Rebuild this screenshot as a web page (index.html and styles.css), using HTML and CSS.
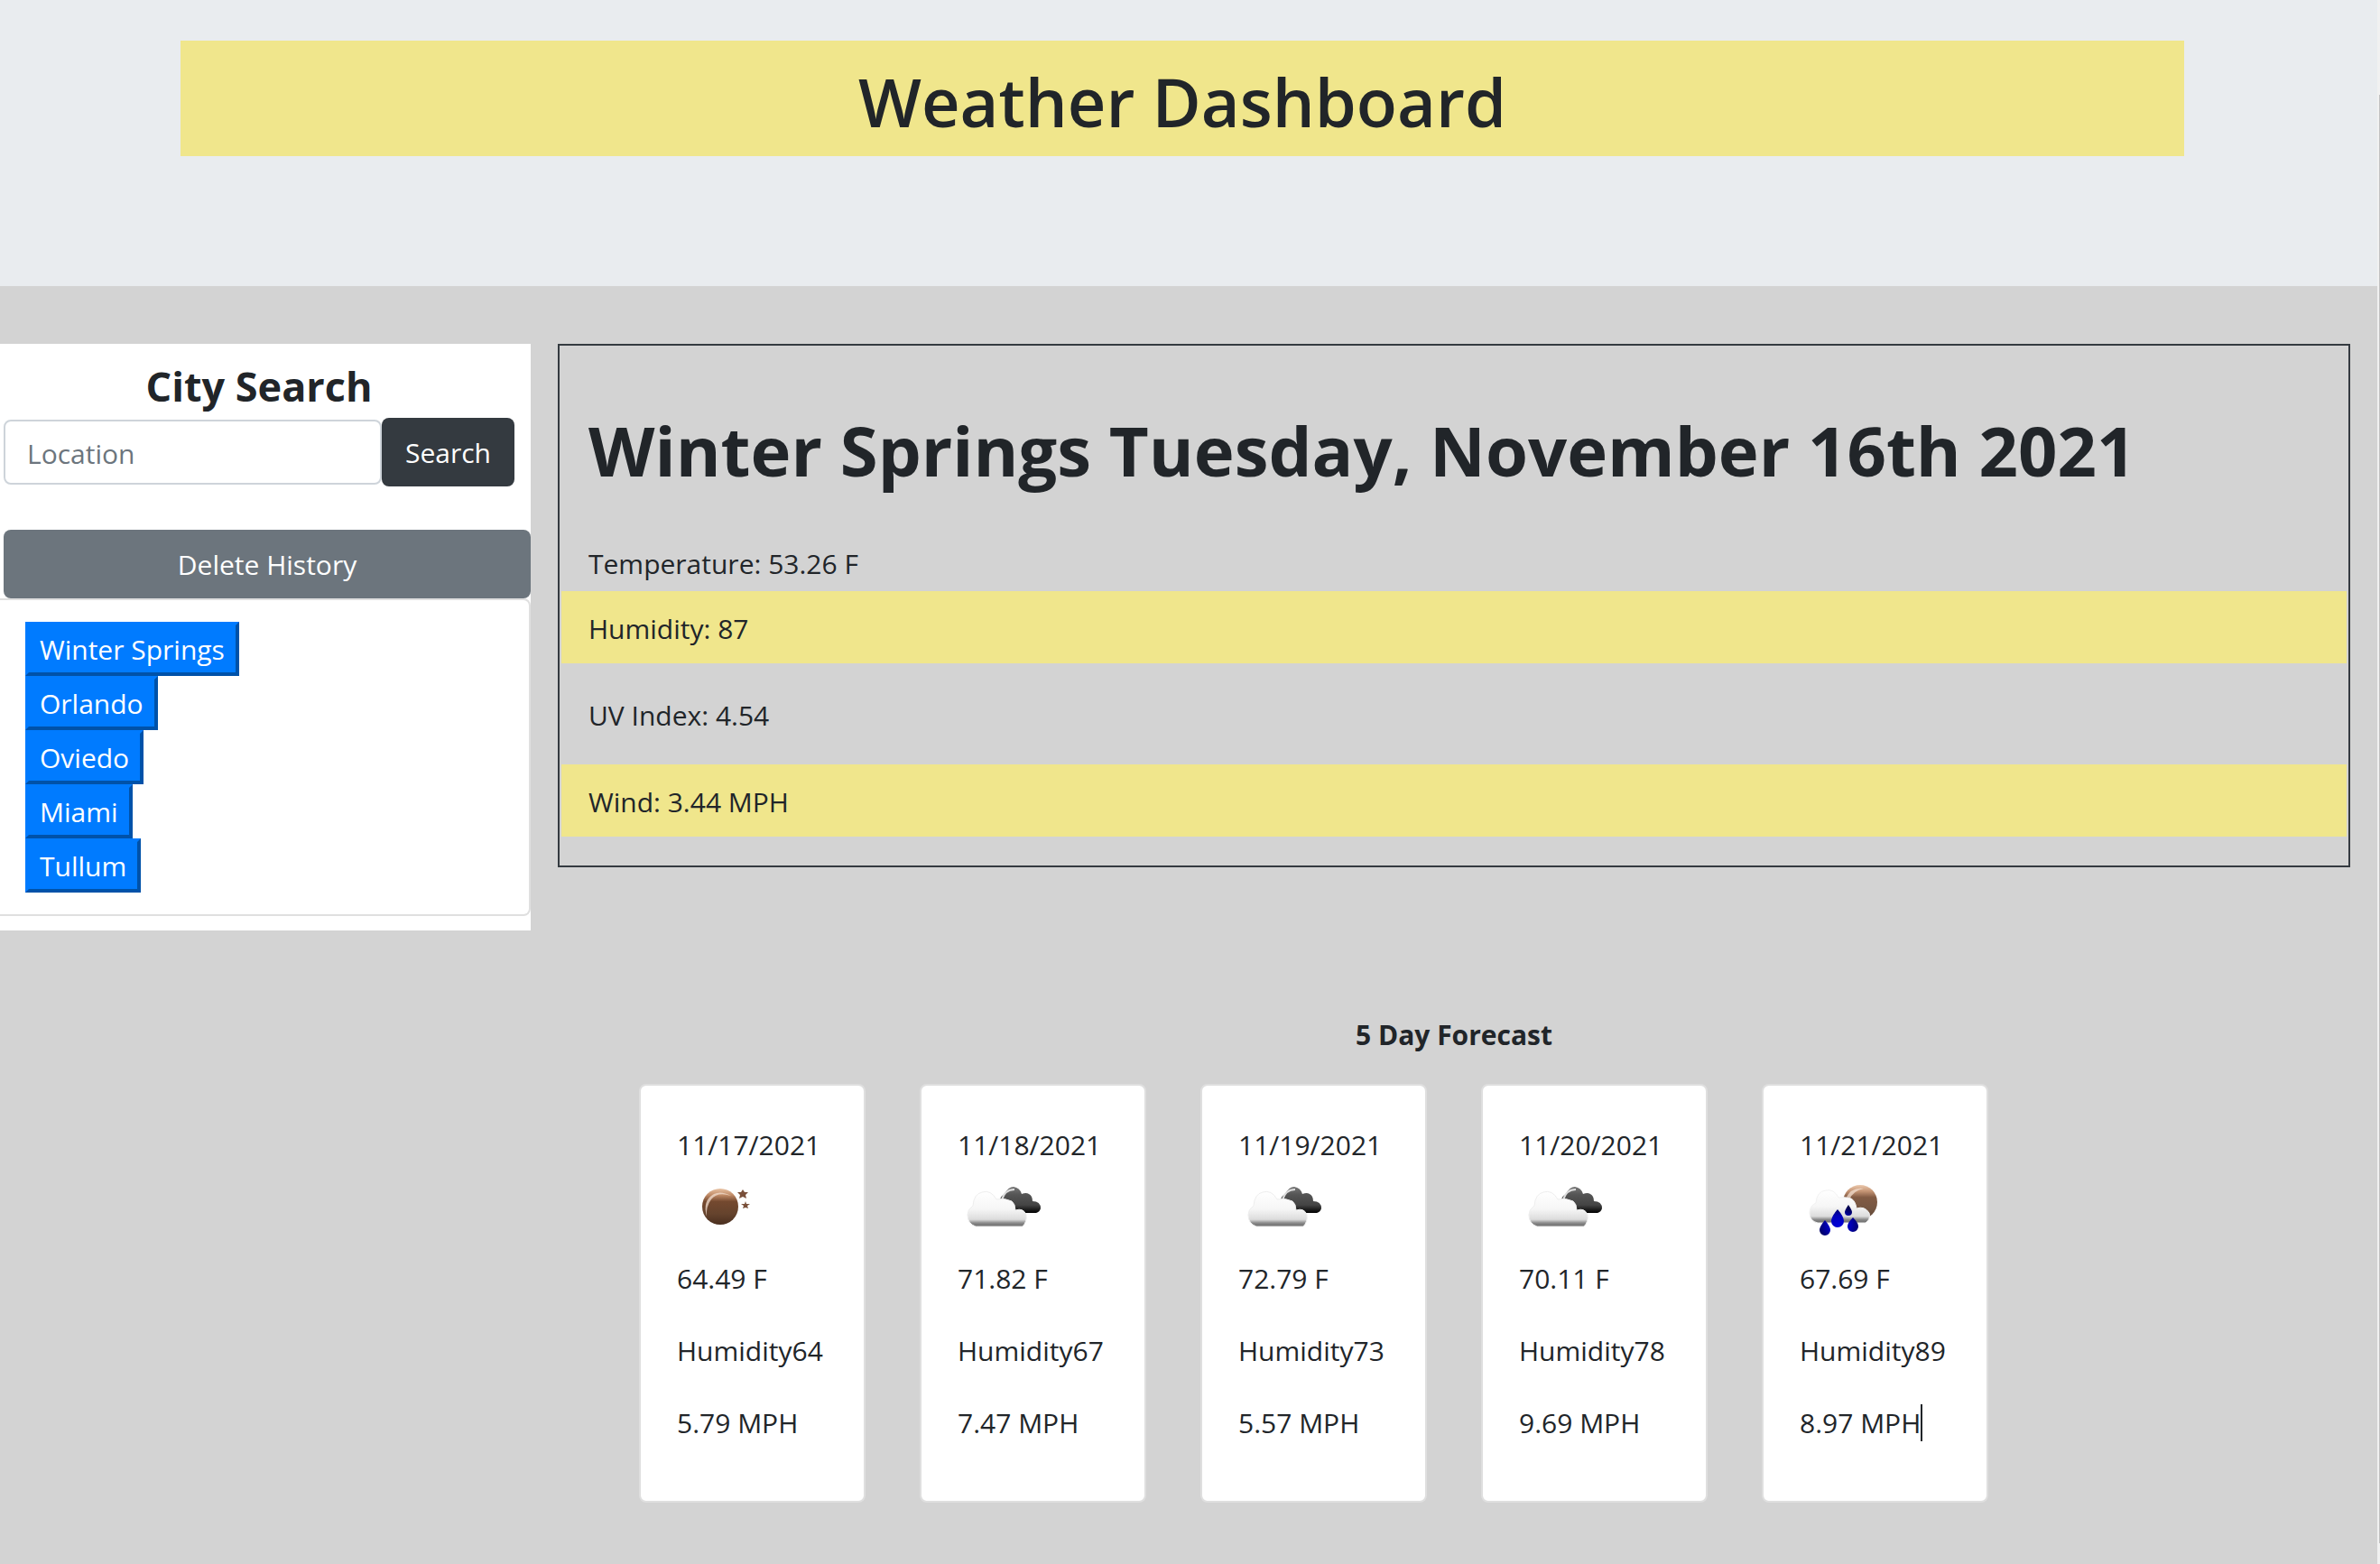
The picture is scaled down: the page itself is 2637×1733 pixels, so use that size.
FILE: index.html
```html
<!DOCTYPE html>
<html lang="en">
<head>
<meta charset="utf-8">
<title>Weather Dashboard</title>
<link rel="stylesheet" href="styles.css">
</head>
<body>
<svg class="defs" aria-hidden="true">
  <defs>
    <linearGradient id="moon" x1="0" y1="0" x2="0" y2="1">
      <stop offset="0" stop-color="#e9c3a4"/><stop offset=".18" stop-color="#c08a66"/><stop offset=".36" stop-color="#74492f"/><stop offset=".7" stop-color="#65432d"/><stop offset="1" stop-color="#4a2f1f"/>
    </linearGradient>
    <linearGradient id="white" x1="0" y1="0" x2="0" y2="1">
      <stop offset="0" stop-color="#fff"/><stop offset=".5" stop-color="#f6f6f6"/><stop offset=".8" stop-color="#dcdcdc"/><stop offset=".9" stop-color="#8a8a8a"/><stop offset="1" stop-color="#686868"/>
    </linearGradient>
    <linearGradient id="dark" x1="0" y1="0" x2="0" y2="1">
      <stop offset="0" stop-color="#777"/><stop offset=".3" stop-color="#555"/><stop offset=".7" stop-color="#444"/><stop offset="1" stop-color="#000"/>
    </linearGradient>
    <radialGradient id="drop" cx=".5" cy=".65" r=".6">
      <stop offset="0" stop-color="#0000d8"/><stop offset=".5" stop-color="#0000b8"/><stop offset="1" stop-color="#000050"/>
    </radialGradient>
    <symbol id="clear-night" viewBox="0 0 100 100">
      <circle cx="48" cy="47" r="20" fill="url(#moon)"/>
      <path d="M33 58Q28 40 41 33Q49 29 60 35Q45 30 38 39Q32 47 33 58Z" fill="#f3dfd0" opacity=".75"/>
      <path d="M73 28l2 3 4 0-3 3 1 4-4-2-4 2 1-4-3-3 4 0zM76 41l1 3 4 0-3 2 1 3-3-1-3 1 1-3-3-2 4 0z" fill="#79503a"/>
    </symbol>
    <symbol id="broken-clouds" viewBox="0 0 100 100">
      <path d="M47 39Q48 35 52 33Q56 25 62 25Q69 26 71 33Q76 31 79 33Q83 35 83 41Q92 41 92 49Q91 53 87 54H66Q60 52 61 42Z" fill="url(#dark)"/>
      <path d="M49 40Q52 28 63 28" fill="none" stroke="#ddd" stroke-width="2"/>
      <path d="M20 69Q11 66 11 56Q11 50 17 46Q18 33 27 31Q37 28 43 39Q52 37 60 41Q64 44 64 51Q73 48 76 56Q77 64 72 69Z" fill="url(#white)" stroke="#eee" stroke-width="1"/>
    </symbol>
    <symbol id="rain-night" viewBox="0 0 100 100">
      <circle cx="67" cy="42" r="19" fill="url(#moon)" opacity=".9"/>
      <path d="M51 38Q57 25 71 27Q60 29 55 39Z" fill="#f3dfd0" opacity=".75"/>
      <path d="M20 65Q11 63 11 54Q11 46 18 43Q19 30 29 29Q38 27 43 37Q50 36 57 38Q62 41 63 49Q72 46 77 54Q79 61 73 65Z" fill="url(#white)" stroke="#f2f2f2" stroke-width="1"/>
      <path d="M54 45q4 6 4 8a4 4 0 0 1-8 0q0-2 4-8zM42 50q7 8 7 13a7 7 0 0 1-14 0q0-5 7-13zM59 59q6 6 6 10a6 6 0 0 1-12 0q0-4 6-10zM28 62q6 7 6 11a6 6 0 0 1-12 0q0-4 6-11z" fill="url(#drop)"/>
    </symbol>
  </defs>
</svg>
<div class="page">
  <header class="jumbotron"><h1 class="title">Weather Dashboard</h1></header>
  <main class="layout">
    <aside class="sidebar">
      <h2 class="sidebar-title"><label for="city">City Search</label></h2>
      <form class="search">
        <input class="search-input" id="city" type="text" placeholder="Location">
        <button class="btn btn-dark" type="button">Search</button>
      </form>
      <button class="btn btn-delete" type="button">Delete History</button>
      <div class="history">
        <button class="city" type="button">Winter Springs</button>
        <button class="city" type="button">Orlando</button>
        <button class="city" type="button">Oviedo</button>
        <button class="city" type="button">Miami</button>
        <button class="city" type="button">Tullum</button>
      </div>
    </aside>
    <div class="content">
      <section class="current">
        <h2 class="current-title">Winter Springs Tuesday, November 16th 2021</h2>
        <p class="temperature">Temperature: 53.26 F</p>
        <p class="reading highlight">Humidity: 87</p>
        <p class="reading">UV Index: 4.54</p>
        <p class="reading highlight">Wind: 3.44 MPH</p>
      </section>
      <section>
        <h3 class="forecast-title">5 Day Forecast</h3>
        <div class="forecast">
          <article class="day"><p class="date">11/17/2021</p><svg class="icon"><use href="#clear-night"/></svg><p>64.49 F</p><p>Humidity64</p><p>5.79 MPH</p></article>
          <article class="day"><p class="date">11/18/2021</p><svg class="icon"><use href="#broken-clouds"/></svg><p>71.82 F</p><p>Humidity67</p><p>7.47 MPH</p></article>
          <article class="day"><p class="date">11/19/2021</p><svg class="icon"><use href="#broken-clouds"/></svg><p>72.79 F</p><p>Humidity73</p><p>5.57 MPH</p></article>
          <article class="day"><p class="date">11/20/2021</p><svg class="icon"><use href="#broken-clouds"/></svg><p>70.11 F</p><p>Humidity78</p><p>9.69 MPH</p></article>
          <article class="day"><p class="date">11/21/2021</p><svg class="icon"><use href="#rain-night"/></svg><p>67.69 F</p><p>Humidity89</p><p><span class="caret">8.97 MPH</span></p></article>
        </div>
      </section>
    </div>
  </main>
</div>
<div class="scrollbar"></div>
</body>
</html>
```
FILE: styles.css
```css
* { box-sizing: border-box; }
body {
  margin: 0;
  min-height: 100vh;
  display: flex;
  background: #d3d3d3;
  color: #212529;
  font: 30px/48px "Open Sans", sans-serif;
}
h1, h2, h3, p { margin: 0; }
button, input { font: inherit; }
.defs { position: absolute; width: 0; height: 0; }
.page { flex: 1; min-width: 0; }
.scrollbar {
  width: 3px;
  padding: 105px 0 23px 2px;
  background: linear-gradient(#c1c1c1, #c1c1c1) no-repeat content-box, linear-gradient(#f1f1f1, #f1f1f1);
}

.jumbotron { padding: 45px 214px 144px 200px; background: #e9ecef; }
.title {
  padding: 20px 16px 12px;
  background: #f0e68c;
  font-size: 74px;
  line-height: 96px;
  font-weight: 600;
  text-align: center;
}

.layout {
  display: grid;
  grid-template-columns: 588px 1fr;
  gap: 30px;
  align-items: start;
  padding: 64px 30px 64px 0;
}
.sidebar { padding: 18px 0 16px; background: #fff; }
.sidebar-title {
  padding-right: 14px;
  font-size: 45px;
  line-height: 58px;
  text-align: center;
}
.search { display: flex; align-items: center; padding: 6px 18px 48px 4px; }
.search-input {
  flex: 1;
  min-width: 0;
  height: 72px;
  padding: 2px 24px 0;
  border: 2px solid #ced4da;
  border-radius: 8px;
  background: #fff;
}
.search-input::placeholder { color: #6c757d; opacity: 1; }
.btn { height: 76px; padding: 2px 26px 0; border: 0; border-radius: 8px; color: #fff; }
.btn-dark { background: #343a40; }
.btn-delete { display: block; width: calc(100% - 4px); margin-left: 4px; background: #6c757d; }
.history {
  display: flex;
  flex-direction: column;
  align-items: flex-start;
  padding: 24px 28px;
  border: solid #dfdfdf;
  border-width: 2px 2px 2px 0;
  border-radius: 0 8px 8px 0;
}
.city {
  height: 60px;
  padding: 2px 12px 0;
  border: 4px solid;
  border-color: #007bff #0052a9 #0052a9 #007bff;
  background: #007bff;
  color: #fff;
}

.current { padding: 68px 2px 32px; border: 2px solid #343a40; }
.current-title { padding: 0 30px; font-size: 76px; line-height: 96px; }
.temperature { padding: 54px 30px 6px; }
.reading { padding: 18px 30px 14px; }
.reading + .reading { margin-top: 16px; }
.highlight { background: #f0e68c; }

.forecast-title { margin-top: 162px; font-size: 30px; text-align: center; }
.forecast { display: flex; gap: 60px; padding: 30px 90px 0; }
.day {
  width: 251px;
  padding: 42px 0 62px 40px;
  border: 2px solid #dfdfdf;
  border-radius: 8px;
  background: #fff;
}
.day p + p { margin-top: 32px; }
.icon { display: block; width: 100px; height: 100px; margin: -3px 0 3px; }
.caret { border-right: 2px solid #212529; }
```
